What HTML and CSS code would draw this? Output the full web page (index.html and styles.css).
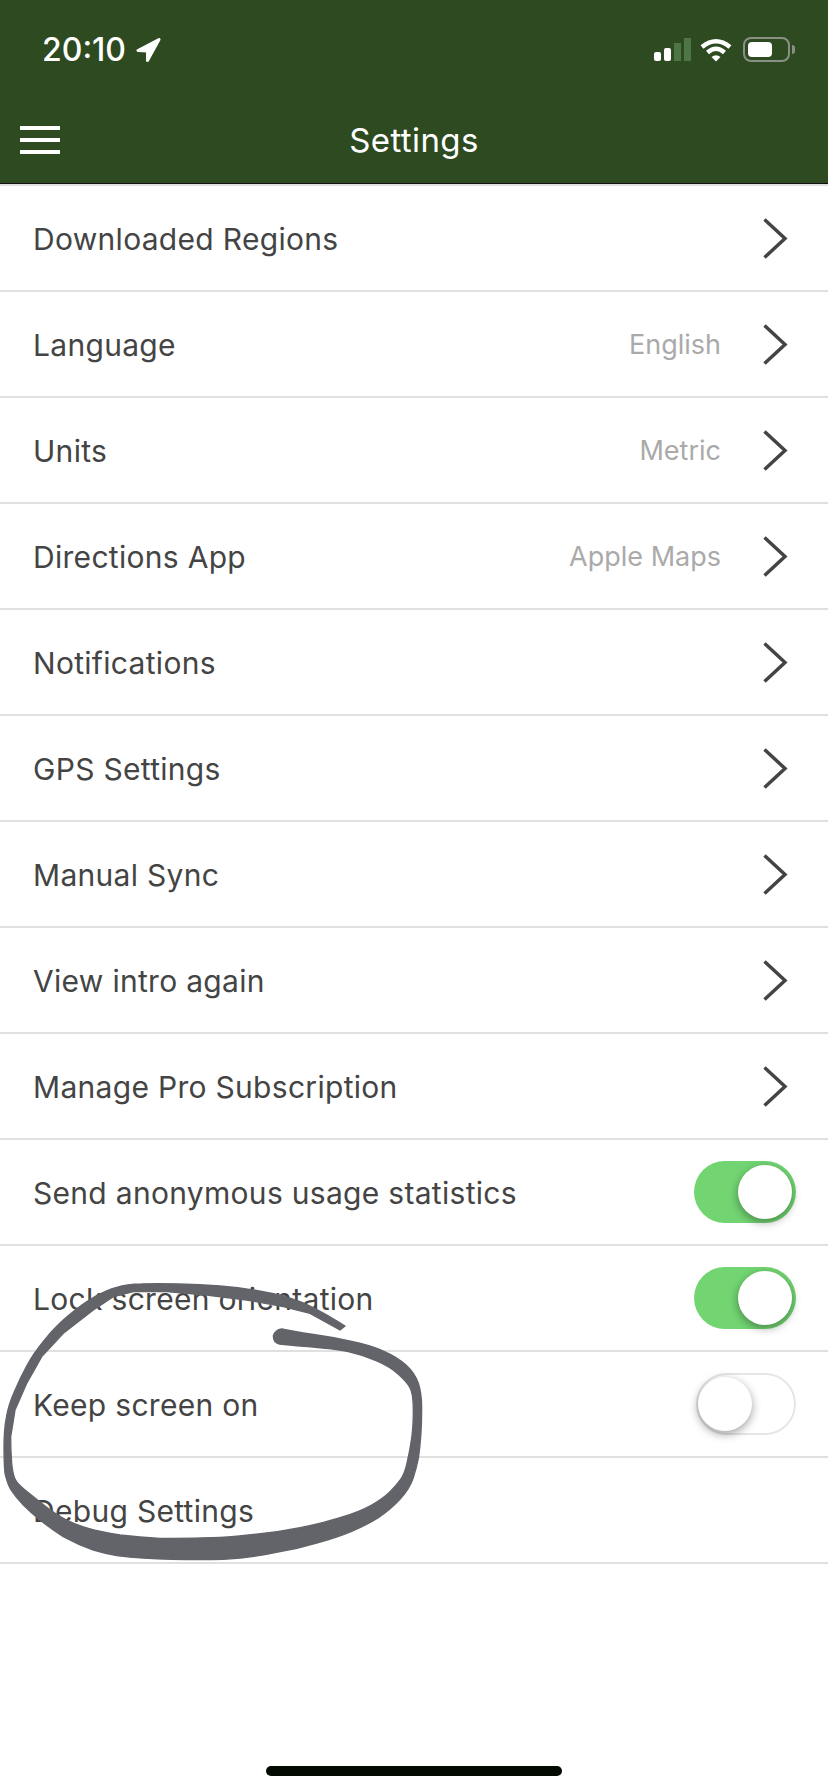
FILE: index.html
```html
<!DOCTYPE html>
<html lang="en">
<head>
    <meta charset="UTF-8">
    <meta name="viewport" content="width=device-width, initial-scale=1.0">
    <title>Settings</title>
    <link rel="stylesheet" href="styles.css">
</head>
<body>
    <div class="cabecalho">
        <div class="status">
            <div class="hora">
                <span>20:10</span>
                <svg class="seta" width="25" height="24" viewBox="0 0 25 24"><path d="M23 1.500 L2 12.500 L11.500 13 L11.500 22.500 Z" fill="#fff" stroke="#fff" stroke-width="3" stroke-linejoin="round"/></svg>
            </div>
            <div class="icones">
                <div class="sinal">
                    <i class="b1"></i><i class="b2"></i><i class="b3"></i><i class="b4"></i>
                </div>
                <svg class="wifi" width="32" height="25" viewBox="0 0 32 25">
                    <path d="M2 10 Q16 -1.500 30 10" fill="none" stroke="#fff" stroke-width="4.500"/>
                    <path d="M7.500 15.500 Q16 8 24.500 15.500" fill="none" stroke="#fff" stroke-width="4.500"/>
                    <path d="M11.500 20 Q16 16.500 20.500 20 L16 24.500 Z" fill="#fff"/>
                </svg>
                <div class="bateria"><div class="carga"></div></div>
                <div class="polo"></div>
            </div>
        </div>
        <div class="barra">
            <div class="menu"><i></i><i></i><i></i></div>
            <div class="titulo">Settings</div>
        </div>
    </div>

    <div class="lista">
        <div class="item"><span class="nome">Downloaded Regions</span><svg class="chev" viewBox="0 0 25 41"><path d="M1.500 1.500 L22 20.500 L1.500 39.500"/></svg></div>
        <div class="item"><span class="nome">Language</span><span class="valor">English</span><svg class="chev" viewBox="0 0 25 41"><path d="M1.500 1.500 L22 20.500 L1.500 39.500"/></svg></div>
        <div class="item"><span class="nome">Units</span><span class="valor">Metric</span><svg class="chev" viewBox="0 0 25 41"><path d="M1.500 1.500 L22 20.500 L1.500 39.500"/></svg></div>
        <div class="item"><span class="nome">Directions App</span><span class="valor">Apple Maps</span><svg class="chev" viewBox="0 0 25 41"><path d="M1.500 1.500 L22 20.500 L1.500 39.500"/></svg></div>
        <div class="item"><span class="nome">Notifications</span><svg class="chev" viewBox="0 0 25 41"><path d="M1.500 1.500 L22 20.500 L1.500 39.500"/></svg></div>
        <div class="item"><span class="nome">GPS Settings</span><svg class="chev" viewBox="0 0 25 41"><path d="M1.500 1.500 L22 20.500 L1.500 39.500"/></svg></div>
        <div class="item"><span class="nome">Manual Sync</span><svg class="chev" viewBox="0 0 25 41"><path d="M1.500 1.500 L22 20.500 L1.500 39.500"/></svg></div>
        <div class="item"><span class="nome">View intro again</span><svg class="chev" viewBox="0 0 25 41"><path d="M1.500 1.500 L22 20.500 L1.500 39.500"/></svg></div>
        <div class="item"><span class="nome">Manage Pro Subscription</span><svg class="chev" viewBox="0 0 25 41"><path d="M1.500 1.500 L22 20.500 L1.500 39.500"/></svg></div>
        <div class="item com-chave"><span class="nome">Send anonymous usage statistics</span><div class="chave ligada"><div class="botao"></div></div></div>
        <div class="item com-chave"><span class="nome">Lock screen orientation</span><div class="chave ligada"><div class="botao"></div></div></div>
        <div class="item com-chave"><span class="nome">Keep screen on</span><div class="chave"><div class="botao"></div></div></div>
        <div class="item"><span class="nome">Debug Settings</span></div>
    </div>

    <div class="home"></div>

    <svg class="rabisco" width="440" height="330" viewBox="0 0 1320 990">
        <path fill="#63646a" stroke="#63646a" stroke-width="4" stroke-linejoin="round" d="M1035,228 Q950,175 900,155 Q850,135 785,124 Q720,112 660,108 Q600,103 535,102 Q470,100 425,102 Q380,103 350,112 Q320,120 285,140 Q250,160 210,193 Q170,225 135,268 Q100,310 80,348 Q60,385 43,425 Q25,465 19,503 Q12,540 12,590 Q12,640 15,670 Q22,700 32,718 Q50,745 70,765 Q95,790 120,810 Q155,838 190,860 Q235,885 280,900 Q315,910 350,917 Q430,927 515,928 Q600,930 670,928 Q760,922 825,908 Q890,897 950,879 Q1010,863 1055,844 Q1100,825 1135,803 Q1170,780 1200,748 Q1230,715 1240,683 Q1250,650 1255,625 Q1265,560 1265,475 Q1265,430 1255,400 Q1245,370 1218,345 Q1190,320 1150,303 Q1110,285 1055,274 Q1000,262 950,255 Q900,248 860,240 L845,237 Q825,240 820,258 Q820,278 838,282 L900,288 Q1000,295 1045,305 Q1090,315 1130,333 Q1170,350 1195,373 Q1220,395 1230,413 Q1240,430 1240,480 Q1240,530 1235,565 Q1230,600 1222,635 Q1215,670 1202,688 Q1190,705 1170,725 Q1150,745 1115,765 Q1080,785 1020,803 Q960,822 900,833 Q840,845 775,852 Q710,860 660,862 Q565,866 480,865 Q420,862 360,855 Q300,845 265,835 Q230,825 200,810 Q170,795 135,768 Q100,740 75,720 Q50,700 44,685 Q38,670 35,640 Q32,600 32,560 Q39,520 45,480 Q63,440 80,400 Q103,360 125,320 Q158,285 190,250 Q235,215 280,180 Q310,160 340,140 Q370,133 400,125 Q450,125 500,125 Q560,130 620,135 Q680,143 740,150 Q795,160 850,170 Q890,180 930,190 Q975,215 1020,240 Z"/>
    </svg>
</body>
</html>
```

FILE: styles.css
```css
* {
    box-sizing: border-box;
}
html, body {
    margin: 0;
    height: 1792px;
}
body {
    position: relative;
    display: flex;
    flex-direction: column;
    font-family: Inter, "Noto Sans", sans-serif;
    background-color: #fff;
    color: #444;
    overflow: hidden;
}
.cabecalho {
    height: 184px;
    background: #2d4a20;
    border-bottom: 1px solid #111;
    color: #fff;
}
.status {
    height: 88px;
    padding: 37px 33px 0 42px;
    display: flex;
    justify-content: space-between;
}
.hora {
    display: flex;
    align-items: flex-start;
    gap: 10px;
    font-size: 32px;
    font-weight: 500;
    line-height: 26px;
}
.seta {
    margin-top: 1px;
}
.icones {
    display: flex;
    align-items: flex-start;
}
.sinal {
    display: flex;
    align-items: flex-end;
    gap: 3px;
    height: 24px;
}
.sinal i {
    display: block;
    width: 7px;
    background: #fff;
    border-radius: 2px;
}
.sinal .b1 { height: 9px; }
.sinal .b2 { height: 13px; }
.sinal .b3, .sinal .b4 {
    border-radius: 0;
    background: radial-gradient(#86bd7e 45%, transparent 50%) 0 0 / 2px 2px #4d7546;
}
.sinal .b3 { height: 18px; }
.sinal .b4 { height: 23px; }
.wifi {
    margin-left: 9px;
}
.bateria {
    width: 47px;
    height: 25px;
    margin-left: 11px;
    padding: 3px;
    border: 2px solid #8b9086;
    border-radius: 8px;
}
.carga {
    width: 24px;
    height: 100%;
    background: #fff;
    border-radius: 4px;
}
.polo {
    width: 3px;
    height: 9px;
    margin: 8px 0 0 2px;
    background: #8b9086;
    border-radius: 0 3px 3px 0;
}
.barra {
    height: 95px;
    position: relative;
    display: flex;
    align-items: center;
    justify-content: center;
}
.menu {
    position: absolute;
    left: 20px;
    top: 38px;
    width: 40px;
    display: flex;
    flex-direction: column;
    gap: 8px;
}
.menu i {
    display: block;
    height: 4px;
    background: #fff;
}
.titulo {
    font-size: 33px;
    letter-spacing: 0.4px;
    line-height: 36px;
    margin-top: 8px;
}
.lista {
    border-top: 2px solid #e0e0e0;
}
.item {
    height: 106px;
    padding: 0 40px 0 33px;
    border-bottom: 2px solid #e0e0e0;
    display: flex;
    align-items: center;
    font-size: 30px;
    letter-spacing: 0.3px;
}
.item.com-chave {
    padding-right: 32px;
}
.nome {
    margin-top: 2px;
}
.valor {
    margin-left: auto;
    font-size: 27px;
    letter-spacing: 0;
    color: #aaa;
}
.chev {
    width: 25px;
    height: 41px;
    margin-left: auto;
    fill: none;
    stroke: #444;
    stroke-width: 3.5;
}
.valor + .chev {
    margin-left: 42px;
}
.chave {
    width: 100px;
    height: 62px;
    margin-left: auto;
    border: 2px solid #e6e6e6;
    border-radius: 31px;
    background: #fff;
    display: flex;
    align-items: center;
}
.chave.ligada {
    width: 102px;
    border: 0;
    padding: 4px;
    background: #72d572;
    justify-content: flex-end;
}
.botao {
    width: 54px;
    height: 54px;
    border-radius: 50%;
    background: #fff;
    box-shadow: 0 3px 10px rgba(0, 0, 0, 0.38);
}
.home {
    width: 296px;
    height: 10px;
    margin: auto auto 16px;
    background: #020a02;
    border-radius: 5px;
}
.rabisco {
    position: absolute;
    left: 0;
    top: 1250px;
}
```
